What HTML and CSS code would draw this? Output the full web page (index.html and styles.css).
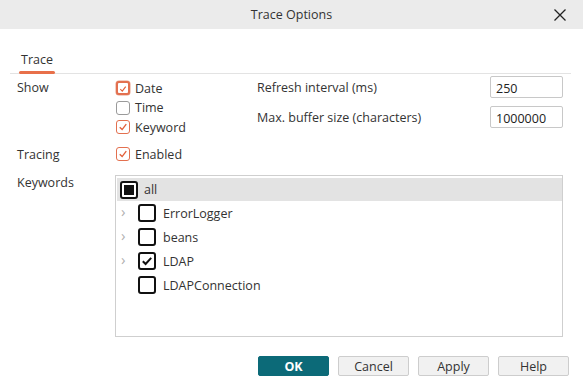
FILE: index.html
```html
<!DOCTYPE html>
<html>
<head>
<meta charset="utf-8">
<link rel="stylesheet" href="styles.css">
</head>
<body>
<div class="dialog">
  <div class="titlebar">
    <span></span>
    <span class="title">Trace Options</span>
    <span class="close"><svg width="14" height="14" viewBox="0 0 14 14"><path d="M1.5 1.5 L12.5 12.5 M12.5 1.5 L1.5 12.5" stroke="#222" stroke-width="1.3" fill="none"/></svg></span>
  </div>
  <div class="tabs">
    <div class="tab active">Trace</div>
  </div>
  <div class="form">
    <div class="top">
      <div class="label">Show</div>
      <div class="checks">
        <div class="cb"><span class="box checked focus"><svg viewBox="0 0 14 14"><path d="M3.2 7.2 L6 10 L10.8 3.6" /></svg></span>Date</div>
        <div class="cb"><span class="box"></span>Time</div>
        <div class="cb"><span class="box checked"><svg viewBox="0 0 14 14"><path d="M3.2 7.2 L6 10 L10.8 3.6" /></svg></span>Keyword</div>
      </div>
      <div class="fields">
        <div class="field"><span class="flabel">Refresh interval (ms)</span><span class="input">250</span></div>
        <div class="field"><span class="flabel">Max. buffer size (characters)</span><span class="input">1000000</span></div>
      </div>
    </div>
    <div class="row tracing">
      <div class="label">Tracing</div>
      <div class="cb"><span class="box checked"><svg viewBox="0 0 14 14"><path d="M3.2 7.2 L6 10 L10.8 3.6" /></svg></span>Enabled</div>
    </div>
    <div class="row keywords">
      <div class="label">Keywords</div>
      <div class="tree">
        <div class="node root selected"><span class="tbox indet"><span class="fill"></span></span><span class="ntext">all</span></div>
        <div class="node child"><span class="chev">&#x203A;</span><span class="tbox"></span><span class="ntext">ErrorLogger</span></div>
        <div class="node child"><span class="chev">&#x203A;</span><span class="tbox"></span><span class="ntext">beans</span></div>
        <div class="node child"><span class="chev">&#x203A;</span><span class="tbox"><svg viewBox="0 0 14 14"><path d="M2.8 7.2 L5.6 10 L11.2 3.8" /></svg></span><span class="ntext">LDAP</span></div>
        <div class="node child"><span class="chev empty"></span><span class="tbox"></span><span class="ntext">LDAPConnection</span></div>
      </div>
    </div>
  </div>
  <div class="buttons">
    <button class="btn primary">OK</button>
    <button class="btn">Cancel</button>
    <button class="btn">Apply</button>
    <button class="btn">Help</button>
  </div>
</div>
</body>
</html>
```
FILE: styles.css
```css
* { box-sizing: border-box; }
html, body { margin: 0; padding: 0; }
body {
  width: 583px;
  height: 389px;
  background: #ffffff;
  font-family: "Open Sans", "Noto Sans", sans-serif;
  font-size: 12.5px;
  color: #333333;
  overflow: hidden;
}
.dialog { width: 583px; height: 389px; display: flex; flex-direction: column; }
.titlebar {
  height: 29px;
  background: #ebebeb;
  display: grid;
  grid-template-columns: 1fr auto 1fr;
  align-items: center;
}
.title { font-size: 12.5px; color: #333; }
.close { justify-self: end; margin-right: 16px; display: flex; }
.tabs {
  margin: 18px 12px 0 10px;
  border-bottom: 1px solid #e3e3e3;
  display: flex;
  height: 27px;
  padding-left: 9px;
}
.tab {
  position: relative;
  padding: 4px 2px 0 2px;
  font-size: 12.5px;
  color: #333;
  height: 26px;
}
.tab.active::after {
  content: "";
  position: absolute;
  left: 0; right: 0; bottom: -1px;
  height: 3px;
  border-radius: 2px;
  background: #e8704a;
}
.form { padding: 5px 20px 0 17px; }
.top { display: flex; }
.label { width: 99px; flex: none; }
.checks { width: 141px; display: flex; flex-direction: column; gap: 3.5px; padding-top: 1px; }
.cb { display: flex; align-items: center; gap: 5px; height: 16px; }
.box {
  width: 14px; height: 14px;
  border: 1px solid #9a9a9a;
  border-radius: 3px;
  display: flex;
  background: #fff;
}
.box.checked { border-color: #e3704f; }
.box.focus { border-width: 2px; box-shadow: 0 0 0 0.5px #e8a08a; }
.box svg { width: 12px; height: 12px; margin: auto; }
.box svg path { stroke: #e3603a; stroke-width: 1.6; fill: none; }
.fields { display: flex; flex-direction: column; gap: 11px; padding-top: 0; }
.field { display: flex; width: 306px; justify-content: space-between; }
.flabel { padding-top: 0; }
.input {
  width: 73px; height: 22px;
  border: 1px solid #c8c8c8;
  border-radius: 2px;
  padding: 3px 0 0 5px;
  margin-top: -3px;
  color: #222;
}
.row { display: flex; }
.tracing { margin-top: 11px; }
.keywords { margin-top: 12px; }
.keywords .label { margin-top: -1px; }
.tree {
  width: 448px;
  height: 162px;
  margin-left: -1px;
  border: 1px solid #cfcfcf;
  padding: 2px 0 0 1px;
  color: #333;
}
.node { display: flex; align-items: center; height: 24px; }
.node.selected { background: #e3e3e3; height: 23px; }
.tbox {
  width: 18px; height: 18px;
  border: 2px solid #111;
  border-radius: 3px;
  display: flex;
  flex: none;
  background: #fff;
}
.tbox svg { width: 14px; height: 14px; margin: auto; }
.tbox svg path { stroke: #111; stroke-width: 2; fill: none; }
.tbox.indet .fill { width: 10px; height: 10px; background: #111; margin: auto; }
.root { padding-left: 3px; }
.root .ntext { margin-left: 6px; }
.chev { width: 21px; padding-left: 4px; color: #b0b0b0; font-size: 15px; line-height: 1; margin-top: -3px; }
.child .ntext { margin-left: 7px; }
.buttons {
  margin-top: auto;
  margin-bottom: 13px;
  display: flex;
  justify-content: flex-end;
  gap: 9px;
  padding-right: 14px;
}
.btn {
  width: 71px; height: 20px;
  border: 1px solid #cdcdcd;
  border-radius: 2px;
  background: #f1f1f1;
  font-family: "Open Sans", "Noto Sans", sans-serif;
  font-size: 12.5px;
  color: #333;
  padding: 0;
}
.btn.primary { background: #0c6a78; border-color: #0c6a78; color: #fff; font-weight: 700; }
```
